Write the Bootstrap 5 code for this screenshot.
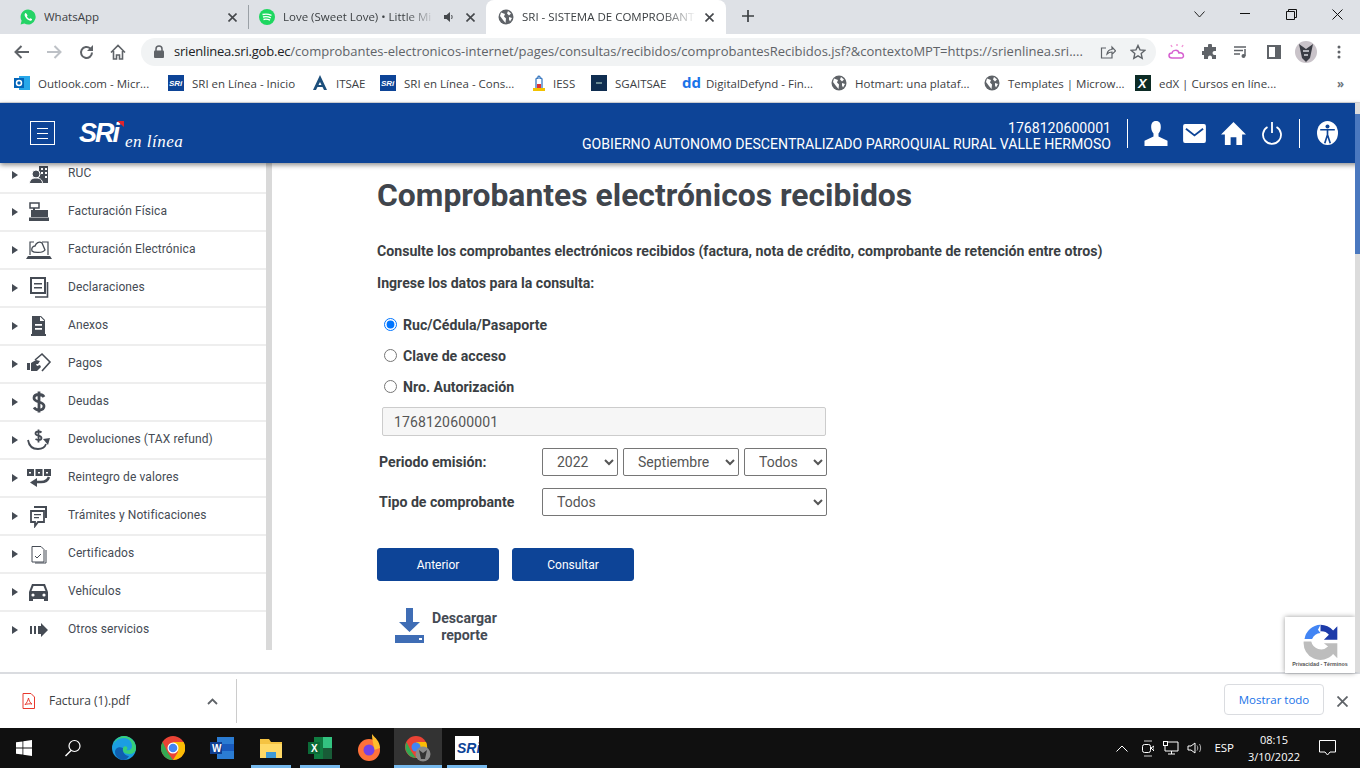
<!DOCTYPE html>
<html lang="es">
<head>
  <meta charset="UTF-8">
  <title>SRI - SISTEMA DE COMPROBANTES</title>
  <link href="https://cdn.jsdelivr.net/npm/bootstrap@5.3.0/dist/css/bootstrap.min.css" rel="stylesheet">
  <style>
    html, body { height: 768px; overflow: hidden; }
    body { font-family: "Open Sans", "Liberation Sans", sans-serif; font-size: 12px; color: #3c4043; background: #fff; }
    .tabstrip { height: 34px; background: #dee1e6; }
    .tabitem { height: 34px; font-size: 11.5px; white-space: nowrap; }
    .tabitem svg.favi { margin-right: 8px; flex-shrink: 0; }
    .tab-a { width: 248px; padding: 0 11px 0 20px; }
    .tab-b { width: 236px; height: 24px; margin-top: 5px; padding: 0 9px 0 10px; border-left: 1px solid #9aa0a6; }
    .tab-c { width: 240px; margin-left: 2px; padding: 0 12px; background: #fff; border-radius: 8px 8px 0 0; }
    .tabtitle { flex: 1; overflow: hidden; }
    .fadeend { -webkit-mask-image: linear-gradient(to right, #000 80%, transparent 100%); mask-image: linear-gradient(to right, #000 80%, transparent 100%); }
    .newtab { margin: 10px auto 0 16px; }
    .winbtn { width: 46px; height: 28px; }
    .toolbar { height: 35px; padding-left: 6px; }
    .tbtn { width: 32px; }
    .omnibox { height: 28px; width: 1015px; margin-left: 7px; background: #f1f3f4; border-radius: 14px; font-size: 13px; color: #5f6368; padding: 0 10px 0 13px; white-space: nowrap; }
    .omnibox b { font-weight: 400; color: #202124; letter-spacing: -.2px; }
    .marks { height: 34px; border-bottom: 1px solid #dadce0; padding: 0 0 4px 14px; white-space: nowrap; font-size: 11.5px; }
    .markitem { flex-shrink: 0; }
    .markitem svg { margin-right: 8px; }
    .markitem:nth-child(1) { width: 154px; }
    .markitem:nth-child(2) { width: 144px; }
    .markitem:nth-child(3) { width: 68px; }
    .markitem:nth-child(4) { width: 152px; }
    .markitem:nth-child(5) { width: 59px; }
    .markitem:nth-child(6) { width: 91px; }
    .markitem:nth-child(7) { width: 149px; }
    .markitem:nth-child(8) { width: 153px; }
    .markitem:nth-child(9) { width: 151px; }
    .markitem:nth-child(5) svg { margin-right: 7px; }
    .ddmark { display: inline-block; width: 24px; color: #1a73e8; font-size: 15px; font-weight: 700; line-height: 1; }
    .sitehead { height: 60px; background: #0d4497; color: #fff; font-family: Roboto, sans-serif; box-shadow: 0 2px 5px rgba(0,0,0,.45); position: relative; z-index: 2; padding-left: 30px; padding-right: 22px; }
    .burger { width: 25px; height: 24px; border: 1px solid #fff; }
    .srilogo { position: relative; font: italic 700 27px "Liberation Sans", sans-serif; letter-spacing: -2px; margin-left: 24px; }
    .srilogo::after { content: ""; position: absolute; left: 38px; top: 3px; border-top: 6px solid #e0242c; border-left: 7px solid transparent; }
    .srilogo span { position: relative; top: 5px; font: italic 400 17px "Liberation Serif", serif; letter-spacing: .5px; margin-left: 7px; }
    .headid { font-size: 14.1px; line-height: 16px; text-align: right; margin-top: 6px; margin-right: 16px; }
    .headsep { width: 1px; height: 29px; background: #fff; flex-shrink: 0; }
    .pagebody { height: 509px; position: relative; font-family: Roboto, sans-serif; }
    .sidemenu { width: 272px; height: 487px; border-right: 6px solid #d9d9d9; overflow: hidden; flex-shrink: 0; }
    .menuitem { height: 38px; flex-shrink: 0; border-bottom: 2px solid #eee; padding-left: 12px; color: #454b54; font-size: 12px; letter-spacing: .1px; }
    .menuitem:first-child { height: 31px; padding-bottom: 6px; }
    .menuitem:last-child { border-bottom: 0; padding-bottom: 2px; }
    .caretmark { width: 0; height: 0; border-left: 6px solid #454b54; border-top: 4.5px solid transparent; border-bottom: 4.5px solid transparent; }
    .micon { width: 26px; height: 24px; margin: 0 16px 0 8px; }
    .micon svg { display: block; }
    .menutext { margin-bottom: 3px; }
    .maincol { padding: 0 0 0 105px; width: 840px; color: #3b3f44; }
    .pagetitle { font-size: 31.85px; font-weight: 700; color: #40454c; margin: 14px 0 0; line-height: 36px; }
    .lead-line { font-size: 14.14px; font-weight: 700; margin: 0; line-height: 18px; white-space: nowrap; }
    .lead-a { margin-top: 29px; }
    .lead-b { margin-top: 14px; margin-bottom: 18px; }
    .radioline { height: 31px; padding-left: 7px; font-size: 14.14px; font-weight: 700; }
    .radioline input { width: 13px; height: 13px; margin: 0 6px 2px 0; accent-color: #0075ff; }
    .rucbox { width: 444px; height: 29px; margin-left: 5px; padding-top: 2px; background: #f6f6f6; border: 1px solid #ccc; border-radius: 2px; font-size: 14px; color: #555; padding-left: 11px; letter-spacing: .15px; }
    .fieldrow { height: 29px; margin-top: 11px; font-size: 14.14px; font-weight: 700; }
    .fieldlabel { width: 165px; padding-left: 2px; margin-top: 2px; }
    .selbox { height: 28px; border: 1px solid #767676; border-radius: 2px; background: #fff; color: #555; font-size: 14px; font-weight: 400; padding: 0 6px 0 10px; }
    .sel-year { width: 76px; }
    .sel-month { width: 116px; margin-left: 5px; }
    .sel-day { width: 83px; margin-left: 5px; }
    .sel-type { width: 285px; }
    .btnrow { gap: 13px; margin-top: 32px; }
    .sendbtn { width: 122px; height: 33px; background: #0d4497; border-color: #0d4497; color: #fff; font-size: 12px; padding: 0; border-radius: 3px; }
    .dlrow { margin-top: 27px; padding-left: 18px; }
    .dlblock { font-size: 14.14px; font-weight: 700; color: #454b54; line-height: 17px; text-align: center; margin: 2px 0 0 7px; }
    .captcha { position: absolute; right: 5px; top: 454px; width: 70px; height: 56px; background: #fff; box-shadow: 0 0 5px rgba(0,0,0,.4); font: 700 5.3px "Liberation Sans", sans-serif; color: #555; white-space: nowrap; text-align: center; }
    .captcha svg { display: block; margin: 6px 0 1px 17px; }
    .scrolltrack { position: absolute; right: 0; top: -60px; width: 5px; height: 569px; padding-top: 11px; background: #dcdcdc; z-index: 3; }
    .scrollthumb { height: 140px; background: #4a78bf; }
    .dlbar { height: 56px; border-top: 2px solid #dadce0; padding: 0 12px 0 22px; }
    .dlname { width: 158px; margin-left: 14px; font-size: 12px; }
    .dlsep { width: 1px; height: 44px; background: #ccc; margin-left: 18px; }
    .showall { width: 100px; height: 31px; border: 1px solid #dadce0; border-radius: 4px; color: #1a73e8; font-size: 11.5px; padding: 0; margin: 0 13px 3px 0; }
    .taskbar { height: 40px; background: #101010; color: #fff; font-size: 11.5px; }
    .taskcell { width: 48px; height: 40px; margin-right: 1px; position: relative; }
    .taskcell.open::after { content: ""; position: absolute; left: 4px; right: 4px; bottom: 0; height: 3px; background: #76b9ed; }
    .taskcell.current { background: #333; }
    .taskcell.current::after { left: 0; right: 0; }
    .taskcell.appstart { margin-left: 2px; }
    .tray { padding-right: 24px; }
    .clockbox { width: 54px; margin-left: 13px; line-height: 17px; font-size: 11px; text-align: center; }
  </style>
</head>
<body class="d-flex flex-column">

  <div class="tabstrip d-flex">
    <div class="tabitem tab-a d-flex align-items-center">
      <svg class="favi" width="16" height="16" viewBox="0 0 16 16"><path fill="#25d366" d="M8 .5a7.5 7.5 0 0 0-6.4 11.3L.6 15.500l3.800-1A7.500 7.500 0 1 0 8 .5z"/><path fill="#fff" d="M5.500 4c-.9.600-1.200 2-.4 3.500 1 1.900 2.300 3.200 4.300 4 1.300.4 2.400-.2 2.700-1.100.1-.5-1.700-1.500-2-1.200l-.7.8c-1-.4-2-1.300-2.500-2.400l.6-.8C7.700 6.400 6.200 3.600 5.500 4z"/></svg>
      <span class="tabtitle">WhatsApp</span>
      <svg width="9" height="9" viewBox="0 0 9 9"><path d="M.5.500l8 8M8.500.500l-8 8" stroke="#45484c" stroke-width="1.600"/></svg>
    </div>
    <div class="tabitem tab-b d-flex align-items-center">
      <svg class="favi" width="16" height="16" viewBox="0 0 16 16"><circle cx="8" cy="8" r="8" fill="#1ed760"/><path d="M3.500 5.500c3-.8 6-.6 9 .8M4 8c2.600-.7 5.200-.5 7.800.8M4.500 10.500c2.200-.5 4.400-.4 6.500.7" stroke="#fff" stroke-width="1.300" fill="none"/></svg>
      <span class="tabtitle fadeend">Love (Sweet Love) • Little Mi</span>
      <svg width="10" height="10" viewBox="0 0 10 10" class="mx-2"><path d="M0 3h2.500L6 0v10L2.500 7H0z" fill="#45484c"/><path d="M7.500 3c.8 1.200.8 2.800 0 4" fill="none" stroke="#45484c"/></svg>
      <svg style="margin-left:4px" width="9" height="9" viewBox="0 0 9 9"><path d="M.5.500l8 8M8.500.500l-8 8" stroke="#45484c" stroke-width="1.600"/></svg>
    </div>
    <div class="tabitem tab-c d-flex align-items-center">
      <svg class="favi" width="16" height="16" viewBox="0 0 16 16"><circle cx="8" cy="8" r="7.500" fill="#5f6368"/><path fill="#fff" d="M3 3.500 7 5 6 7.500 8 9.500 7.500 14 5 11 2 7zM10 2l3 2.500-2 2-2-2zM11 8l3 1-2 3.500-1-2z"/></svg>
      <span class="tabtitle fadeend">SRI - SISTEMA DE COMPROBANT</span>
      <svg class="ms-2" width="9" height="9" viewBox="0 0 9 9"><path d="M.5.500l8 8M8.500.500l-8 8" stroke="#45484c" stroke-width="1.600"/></svg>
    </div>
    <svg class="newtab" width="12" height="12" viewBox="0 0 12 12"><path d="M6 0v12M0 6h12" stroke="#3c4043" stroke-width="1.700"/></svg>
    <div class="d-flex">
      <div class="winbtn d-flex align-items-center justify-content-center"><svg width="11" height="7" viewBox="0 0 11 7"><path d="M.5.500 5.500 6l5-5.500" fill="none" stroke="#222"/></svg></div>
      <div class="winbtn d-flex align-items-center justify-content-center"><svg width="10" height="2"><rect width="10" height="1" fill="#111"/></svg></div>
      <div class="winbtn d-flex align-items-center justify-content-center"><svg width="11" height="11" viewBox="0 0 11 11"><path d="M.5 2.500h8v8h-8zM2.500 2.500v-2h8v8h-2" fill="none" stroke="#111"/></svg></div>
      <div class="winbtn d-flex align-items-center justify-content-center"><svg width="11" height="11" viewBox="0 0 11 11"><path d="M.5.500l10 10M10.500.500l-10 10" stroke="#111"/></svg></div>
    </div>
  </div>

  <div class="toolbar d-flex align-items-center">
    <div class="tbtn text-center"><svg width="16" height="14" viewBox="0 0 16 14"><path d="M15 7H2M7.500 1 1.500 7l6 6" fill="none" stroke="#5f6368" stroke-width="2"/></svg></div>
    <div class="tbtn text-center"><svg width="16" height="14" viewBox="0 0 16 14"><path d="M1 7h13M8.500 1l6 6-6 6" fill="none" stroke="#bdc1c6" stroke-width="2"/></svg></div>
    <div class="tbtn text-center"><svg width="15" height="15" viewBox="0 0 15 15"><path d="M13 7.500a5.500 5.500 0 1 1-1.700-4" fill="none" stroke="#5f6368" stroke-width="2"/><path d="M14 0v6H8z" fill="#5f6368"/></svg></div>
    <div class="tbtn text-center"><svg width="16" height="16" viewBox="0 0 16 16"><path d="M1 8.500 8 1.500l7 7M3.500 7v8h3v-4h3v4h3V7" fill="none" stroke="#5f6368" stroke-width="1.600"/></svg></div>
    <div class="omnibox d-flex align-items-center">
      <svg width="10" height="13" viewBox="0 0 10 13" class="flex-shrink-0" style="margin-right:10px"><path d="M2 6V4a3 3 0 0 1 6 0v2" fill="none" stroke="#5f6368" stroke-width="1.500"/><rect y="5.500" width="10" height="7.500" rx="1" fill="#5f6368"/></svg>
      <span class="flex-grow-1"><b>srienlinea.sri.gob.ec</b>/comprobantes-electronicos-internet/pages/consultas/recibidos/comprobantesRecibidos.jsf?&amp;contextoMPT=https://srienlinea.sri....</span>
      <svg width="16" height="16" viewBox="0 0 16 16" class="flex-shrink-0"><path d="M12 9.500V14H1.500V4H6M7 10c.5-3 2.500-4.500 5-4.500V3l3.500 3.800-3.500 3.500V8C10 8 8.500 8.500 7 10z" fill="none" stroke="#5f6368" stroke-width="1.200"/></svg>
      <svg width="16" height="16" viewBox="0 0 16 16" class="flex-shrink-0" style="margin-left:14px"><path d="m8 1.500 2 4.400 4.800.5-3.600 3.200 1 4.700L8 11.900l-4.200 2.400 1-4.700L1.200 6.400 6 5.900z" fill="none" stroke="#5f6368" stroke-width="1.400"/></svg>
    </div>
    <div class="d-flex align-items-center" style="margin-left:12px">
      <svg width="18" height="16" viewBox="0 0 18 16"><path d="M4 14c-4 0-4-5 0-5 .5-3 6-4 7 0 5-1 6 5 2 5z" fill="none" stroke="#d65fd0" stroke-width="1.500"/><path d="M3 1l1 2M9 0v2M15 1l-1 2" stroke="#f29ad8" stroke-width="1.500"/></svg>
      <svg width="16" height="16" viewBox="0 0 16 16" style="margin-left:16px"><path fill="#5f6368" d="M6 1.500a2 2 0 0 1 4 0V3h4v4h-1.500a2 2 0 0 0 0 4H14v4h-4v-1.500a2 2 0 0 0-4 0V15H2v-4H.5a2 2 0 0 1 0-4H2V3h4z"/></svg>
      <svg width="14" height="12" viewBox="0 0 14 12" style="margin-left:16px"><path d="M0 1h12M0 4.500h9M0 8h6" stroke="#5f6368" stroke-width="1.300"/><path d="M11 3v7" stroke="#5f6368" stroke-width="1.500"/><circle cx="9.500" cy="10" r="2" fill="#5f6368"/></svg>
      <svg width="14" height="14" viewBox="0 0 14 14" style="margin-left:19px"><path d="M1 1h12v12H1z" fill="none" stroke="#5f6368" stroke-width="2"/><rect x="8" y="1" width="5" height="12" fill="#5f6368"/></svg>
      <svg width="22" height="22" viewBox="0 0 22 22" style="margin-left:14px"><circle cx="11" cy="11" r="11" fill="#c9c3c9"/><path d="M4 3l7 5 7-5-3 14-4 4-4-4z" fill="#3a3c44"/><path d="M8 10h6M9 14h4" stroke="#d9d9de" stroke-width="1.500"/></svg>
      <svg width="4" height="14" viewBox="0 0 4 14" style="margin-left:20px"><circle cx="2" cy="2" r="1.500" fill="#5f6368"/><circle cx="2" cy="7" r="1.500" fill="#5f6368"/><circle cx="2" cy="12" r="1.500" fill="#5f6368"/></svg>
    </div>
  </div>

  <div class="marks d-flex align-items-center">
    <div class="markitem"><svg width="16" height="16" viewBox="0 0 16 16" class="align-text-bottom"><rect x="5" y="1" width="11" height="14" fill="#28a8ea"/><rect y="3" width="10" height="10" fill="#0364b8"/><circle cx="5" cy="8" r="2.500" fill="none" stroke="#fff" stroke-width="1.500"/></svg>Outlook.com - Micr...</div>
    <div class="markitem"><svg width="16" height="16" viewBox="0 0 16 16" class="align-text-bottom"><rect width="16" height="16" fill="#0d4497"/><text x="1" y="11" font-size="8" font-weight="700" font-style="italic" fill="#fff" font-family="Liberation Sans">SRi</text></svg>SRI en Línea - Inicio</div>
    <div class="markitem"><svg width="16" height="16" viewBox="0 0 16 16" class="align-text-bottom"><path d="M8 0 15 15h-3L8 7l-4 8H1z" fill="#1d4f7c"/><path d="M4 10h8v2H4z" fill="#1d4f7c"/></svg>ITSAE</div>
    <div class="markitem"><svg width="16" height="16" viewBox="0 0 16 16" class="align-text-bottom"><rect width="16" height="16" fill="#0d4497"/><text x="1" y="11" font-size="8" font-weight="700" font-style="italic" fill="#fff" font-family="Liberation Sans">SRi</text></svg>SRI en Línea - Cons...</div>
    <div class="markitem"><svg width="14" height="16" viewBox="0 0 14 16" class="align-text-bottom"><path d="M4 13V4a1 1 0 0 1 2 0V2a1 1 0 0 1 2 0v2a1 1 0 0 1 2 0v9" fill="none" stroke="#2a6ebb" stroke-width="1.200"/><rect x="1" y="13" width="12" height="3" fill="#f2c200"/><rect x="5" y="9" width="4" height="4" fill="#d33"/></svg>IESS</div>
    <div class="markitem"><svg width="16" height="16" viewBox="0 0 16 16" class="align-text-bottom"><rect width="16" height="16" fill="#0f2d50"/><path d="M5 8h6" stroke="#8aa" stroke-width="1.500"/></svg>SGAITSAE</div>
    <div class="markitem"><span class="ddmark">dd</span>DigitalDefynd - Fin...</div>
    <div class="markitem"><svg width="16" height="16" viewBox="0 0 16 16" class="align-text-bottom"><circle cx="8" cy="8" r="7.500" fill="#5f6368"/><path fill="#fff" d="M3 3.500 7 5 6 7.500 8 9.500 7.500 14 5 11 2 7zM10 2l3 2.500-2 2-2-2zM11 8l3 1-2 3.500-1-2z"/></svg>Hotmart: una plataf...</div>
    <div class="markitem"><svg width="16" height="16" viewBox="0 0 16 16" class="align-text-bottom"><circle cx="8" cy="8" r="7.500" fill="#5f6368"/><path fill="#fff" d="M3 3.500 7 5 6 7.500 8 9.500 7.500 14 5 11 2 7zM10 2l3 2.500-2 2-2-2zM11 8l3 1-2 3.500-1-2z"/></svg>Templates | Microw...</div>
    <div class="markitem"><svg width="16" height="16" viewBox="0 0 16 16" class="align-text-bottom"><rect width="16" height="16" fill="#0c2b25"/><text x="3" y="13" font-size="13" font-weight="700" font-style="italic" fill="#fff" font-family="Liberation Sans">X</text></svg>edX | Cursos en líne...</div>
    <div class="ms-auto me-3 text-secondary fw-bold">»</div>
  </div>

  <div class="sitehead d-flex align-items-center">
    <div class="burger d-flex flex-column align-items-center justify-content-center gap-1">
      <span class="d-block bg-white" style="width:11px;height:1px"></span>
      <span class="d-block bg-white" style="width:11px;height:1px"></span>
      <span class="d-block bg-white" style="width:11px;height:1px"></span>
    </div>
    <div class="srilogo me-auto">SRi<span>en línea</span></div>
    <div class="headid"><div>1768120600001</div><div>GOBIERNO AUTONOMO DESCENTRALIZADO PARROQUIAL RURAL VALLE HERMOSO</div></div>
    <div class="headsep" style="margin-right:15px"></div>
    <svg width="26" height="25" viewBox="0 0 26 26" preserveAspectRatio="none"><path fill="#fff" d="M13 0c3.500 0 5 2.500 4.800 7-.2 3-1.300 5-2.300 6v3l9 4.500V26H1.500v-5.500l9-4.500v-3c-1-1-2.100-3-2.300-6C8 2.500 9.500 0 13 0z"/></svg>
    <svg width="23" height="19" viewBox="0 0 24 20" style="margin-left:14px"><rect width="24" height="20" rx="2" fill="#fff"/><path d="m3 5 9 7 9-7" fill="none" stroke="#0d4497" stroke-width="2"/></svg>
    <svg width="25" height="23" viewBox="0 0 26 24" style="margin-left:15px"><path fill="#fff" d="M13 0 26 13h-4v11h-6v-8h-6v8H4V13H0z"/></svg>
    <svg width="20" height="23" viewBox="0 0 20 23" style="margin-left:16px"><path d="M5.500 5a9 9 0 1 0 9 0" fill="none" stroke="#fff" stroke-width="1.800"/><path d="M10 0v11" stroke="#fff" stroke-width="1.800"/></svg>
    <div class="headsep" style="margin:0 17px"></div>
    <svg width="21" height="24" viewBox="0 0 23 26" preserveAspectRatio="none"><ellipse cx="11.500" cy="13" rx="11.500" ry="13" fill="#fff"/><circle cx="11.500" cy="6" r="2.200" fill="#0d4497"/><path d="M3.500 9.500h16M11.500 9v7M11.500 15l-3 9M11.500 15l3 9" stroke="#0d4497" stroke-width="1.800" fill="none"/></svg>
  </div>

  <div class="pagebody d-flex">
    <div class="sidemenu d-flex flex-column" id="sideMenu"></div>
    <div class="maincol">
      <h1 class="pagetitle">Comprobantes electrónicos recibidos</h1>
      <p class="lead-line lead-a">Consulte los comprobantes electrónicos recibidos (factura, nota de crédito, comprobante de retención entre otros)</p>
      <p class="lead-line lead-b">Ingrese los datos para la consulta:</p>
      <label class="radioline d-flex align-items-center"><input type="radio" name="tipoConsulta" checked>Ruc/Cédula/Pasaporte</label>
      <label class="radioline d-flex align-items-center"><input type="radio" name="tipoConsulta">Clave de acceso</label>
      <label class="radioline d-flex align-items-center"><input type="radio" name="tipoConsulta">Nro. Autorización</label>
      <div class="rucbox d-flex align-items-center mt-1">1768120600001</div>
      <div class="fieldrow d-flex align-items-center">
        <div class="fieldlabel">Periodo emisión:</div>
        <select class="selbox sel-year"><option>2022</option></select>
        <select class="selbox sel-month"><option>Septiembre</option></select>
        <select class="selbox sel-day"><option>Todos</option></select>
      </div>
      <div class="fieldrow d-flex align-items-center">
        <div class="fieldlabel">Tipo de comprobante</div>
        <select class="selbox sel-type"><option>Todos</option></select>
      </div>
      <div class="btnrow d-flex">
        <button class="btn sendbtn" type="button">Anterior</button>
        <button class="btn sendbtn" type="button">Consultar</button>
      </div>
      <div class="dlrow d-flex align-items-center">
        <svg width="30" height="36" viewBox="0 0 30 36"><path fill="#3f6db5" d="M11 0h7v14h7L14.500 24 4 14h7z"/><path fill="#3f6db5" d="M0 27h29v8H0z"/><rect x="24" y="30" width="3" height="2" fill="#fff"/></svg>
        <div class="dlblock">Descargar<br>reporte</div>
      </div>
    </div>
    <div class="captcha">
      <svg width="37" height="37" viewBox="0 0 44 44"><path fill="#1c3aa9" d="M22 2a20 20 0 0 1 15 7l5-5v16H26l6-6a12 12 0 0 0-10-4z"/><path fill="#4285f4" d="M22 2A20 20 0 0 0 3 19h9a12 12 0 0 1 10-7l-3-4z"/><path fill="#bdbdbd" d="M2 22h9a12 12 0 0 0 20 6l-5-4h16v18l-5-5A20 20 0 0 1 2 22z"/></svg>
      <div>Privacidad - Términos</div>
    </div>
    <div class="scrolltrack"><div class="scrollthumb"></div></div>
  </div>

  <div class="dlbar d-flex align-items-center">
    <svg width="13" height="16" viewBox="0 0 13 16"><path d="M1 .5h8l3.500 3.500v11.500H1z" fill="none" stroke="#e8382c"/><path d="M6.500 5c-.5 2-1.500 5-3.500 6.500 2-.5 5-1 7-.5-2-1-3-3.500-3.500-6z" fill="none" stroke="#e8382c"/></svg>
    <span class="dlname">Factura (1).pdf</span>
    <svg width="11" height="7" viewBox="0 0 11 7"><path d="M1 6l4.500-4.500L10 6" fill="none" stroke="#5f6368" stroke-width="1.800"/></svg>
    <div class="dlsep me-auto"></div>
    <button class="btn showall" type="button">Mostrar todo</button>
    <svg width="11" height="11" viewBox="0 0 11 11"><path d="M.5.500l10 10M10.500.500l-10 10" stroke="#5f6368" stroke-width="1.800"/></svg>
  </div>

  <div class="taskbar d-flex align-items-center">
    <div class="taskcell d-flex align-items-center justify-content-center"><svg width="16" height="16" viewBox="0 0 16 16"><path fill="#fff" d="M0 2.300 6.500 1.400v6.200H0zM7.300 1.300 16 0v7.600H7.300zM0 8.400h6.500v6.200L0 13.700zM7.300 8.400H16V16l-8.700-1.300z"/></svg></div>
    <div class="taskcell d-flex align-items-center justify-content-center"><svg width="18" height="18" viewBox="0 0 18 18"><circle cx="10.500" cy="7" r="5.500" fill="none" stroke="#fff" stroke-width="1.200"/><path d="M7 11.500 1.500 17" stroke="#fff" stroke-width="1.400"/></svg></div>
    <div class="taskcell appstart d-flex align-items-center justify-content-center"><svg width="24" height="24" viewBox="0 0 24 24"><circle cx="12" cy="12" r="12" fill="#1b9de2"/><path d="M24 12c0 4-3 6-7 6-5 0-7-3-6-6 1-2 3-2 4-1s0 3-1 3c4 1 6-1 6-4 0-5-4-8-8-8C6 2 1 6 1 11c0-6 5-11 11-11s12 5 12 12z" fill="#37d07a"/><path d="M11 12c-1 4 2 8 6 8-1 2-3 4-6 4-4 0-8-4-8-8 0-3 3-6 8-4z" fill="#0f5fb0"/></svg></div>
    <div class="taskcell d-flex align-items-center justify-content-center"><svg width="24" height="24" viewBox="0 0 24 24"><circle cx="12" cy="12" r="12" fill="#ea4335"/><path d="M1.600 6 7 17l5 7a12 12 0 0 1-10.400-18z" fill="#34a853"/><path d="M12 6h10.600A12 12 0 0 1 12 24l5-8z" fill="#fbbc05"/><circle cx="12" cy="12" r="5.500" fill="#fff"/><circle cx="12" cy="12" r="4.300" fill="#4285f4"/></svg></div>
    <div class="taskcell d-flex align-items-center justify-content-center"><svg width="24" height="24" viewBox="0 0 24 24"><rect x="7" y="1" width="17" height="22" fill="#2b7cd3"/><path d="M7 8h17v7H7z" fill="#185abd"/><rect y="6" width="12" height="12" fill="#103f91"/><text x="2" y="16" font-size="10" font-weight="700" fill="#fff" font-family="Liberation Sans">W</text></svg></div>
    <div class="taskcell open d-flex align-items-center justify-content-center"><svg width="24" height="24" viewBox="0 0 24 24"><path d="M1 3h9l2 3h11v16H1z" fill="#f5c342"/><path d="M1 8h22v14H1z" fill="#ffd966"/><path d="M7 22v-6h10v6z" fill="#3f9ad6"/></svg></div>
    <div class="taskcell open d-flex align-items-center justify-content-center"><svg width="24" height="24" viewBox="0 0 24 24"><rect x="6" y="1" width="18" height="22" fill="#107c41"/><path d="M15 1h9v11h-9z" fill="#33c481"/><path d="M15 12h9v11h-9z" fill="#185c37"/><rect y="6" width="12" height="12" fill="#0b6a37"/><text x="3" y="16" font-size="10" font-weight="700" fill="#fff" font-family="Liberation Sans">X</text></svg></div>
    <div class="taskcell d-flex align-items-center justify-content-center"><svg width="24" height="28" viewBox="0 0 24 28"><circle cx="12" cy="16" r="11" fill="#ff7139"/><path d="M15 0c3 4 8 7 8 14l-6 2c0-5-2-9-2-16z" fill="#ffbd2e"/><circle cx="12" cy="16" r="5.500" fill="#7542e5"/></svg></div>
    <div class="taskcell current open d-flex align-items-center justify-content-center"><svg width="26" height="28" viewBox="0 0 26 28"><circle cx="11" cy="13" r="11" fill="#ea4335"/><path d="M1.500 8 6 17l5 7a11 11 0 0 1-9.500-16z" fill="#34a853"/><path d="M11 8h10a11 11 0 0 1-10 16l4-7z" fill="#fbbc05"/><circle cx="11" cy="13" r="4.500" fill="#4285f4"/><circle cx="18" cy="20" r="7.500" fill="#8a8a8a"/><path d="M14 16l4 3 4-3-2 9h-4z" fill="#333"/></svg></div>
    <div class="taskcell open d-flex align-items-center justify-content-center"><svg width="24" height="24" viewBox="0 0 24 24"><rect width="24" height="24" fill="#fff"/><text x="2" y="17" font-size="14" font-weight="700" font-style="italic" fill="#0d4497" font-family="Liberation Sans">SRi</text></svg></div>
    <div class="tray ms-auto d-flex align-items-center">
      <svg width="12" height="7" viewBox="0 0 12 7"><path d="M.5 6.500 6 1l5.500 5.500" fill="none" stroke="#fff"/></svg>
      <svg width="12" height="17" viewBox="0 0 12 17" style="margin-left:14px"><path d="M2 1h8M2 16h8" stroke="#ccc"/><rect x=".5" y="4.500" width="8" height="8" rx="2" fill="none" stroke="#fff"/><path d="m9 8 3-2v5z" fill="none" stroke="#fff"/></svg>
      <svg width="16" height="14" viewBox="0 0 16 14" style="margin-left:9px"><path d="M2 1h13v9H2zM8.500 10v3M5 13h7" fill="none" stroke="#fff"/><rect x=".5" y=".5" width="4" height="4" fill="#101010" stroke="#fff"/></svg>
      <svg width="16" height="14" viewBox="0 0 16 14" style="margin-left:8px"><path d="M1 5h3l4-3v10L4 9H1z" fill="none" stroke="#fff"/><path d="M10 4.500c1 1.500 1 3.500 0 5M12.500 3c1.500 2.500 1.500 5.500 0 8" fill="none" stroke="#aaa"/></svg>
      <span style="margin-left:11px">ESP</span>
      <div class="clockbox"><div>08:15</div><div>3/10/2022</div></div>
      <svg width="17" height="16" viewBox="0 0 17 16" style="margin-left:18px"><path d="M.5.500h16v11.500h-5.500l-2.500 3-2.500-3H.5z" fill="none" stroke="#fff"/></svg>
    </div>
  </div>

  <script>
    // menu lateral: texto + icono de cada opcion (viewBox 26x24)
    const line = 'fill="none" stroke="#454b54"';
    const menuData = [
      ['RUC', '<path d="M13 3h9v17h-9z"/><path fill="#fff" d="M15 5h2v2h-2zM19 5h2v2h-2zM15 9h2v2h-2zM19 9h2v2h-2zM19 13h2v2h-2z"/><circle cx="10" cy="11" r="4" stroke="#fff"/><path stroke="#fff" d="M3.500 20.500c0-4 3-5.500 6.500-5.500s6.500 1.500 6.500 5.500z"/>'],
      ['Facturación Física', '<path d="M4 3h9v5H4z" ' + line + ' stroke-width="1.500"/><path d="M7 8h2v3H7zM5 10h17v7H5zM3 17.500h20V21H3z"/>'],
      ['Facturación Electrónica', '<path d="M4 17V4h4M16 4h6v13" ' + line + ' stroke-width="1.200"/><path d="M2 18h22l2 3H0z"/><path d="M6 13c-1-3 1-5 3-5 1-3 4-5 7-3l3 7c-2 3-11 3-13 1z" ' + line + ' stroke-width="1.300"/>'],
      ['Declaraciones', '<path d="M5 2h14v15H5z" ' + line + ' stroke-width="2"/><path d="M21.500 6v15H9" ' + line + ' stroke-width="1.600"/><path d="M8 7h8v1.500H8zM8 11h8v1.500H8z"/>'],
      ['Anexos', '<path d="M6 2h9l4 4v14H6zM5 20h15v2H5z"/><path fill="#fff" d="M14 2.500V7h4.500zM9 10h7v1.800H9zM9 14h7v1.800H9z"/>'],
      ['Pagos', '<path d="M1 11h3v7H1zM5 11l5-3 4 1-2 3-2 0 1 2 3-1 1 2-4 4H5z"/><path d="m9 8 7-6 8 8-8 9" ' + line + ' stroke-width="1.600"/>'],
      ['Deudas', '<path d="M18 7c-1-2-3-2.500-5-2.500-3 0-5 1-5 3.500 0 5 10 3 10 8 0 3-2 4-5 4-2 0-4-1-5-2.500M13 1.500v21" ' + line + ' stroke-width="2.800"/>'],
      ['Devoluciones (TAX refund)', '<path d="M15.500 4.500c-1-1-2-1-3-1-2 0-3 .8-3 2 0 2.800 6 1.500 6 4.500 0 1.500-1.500 2-3 2-1 0-2-.4-3-1M12.500 1.500v13" ' + line + ' stroke-width="1.800"/><path d="M2 12c1 6 5 9 10 9 4 0 7-2 8-5" ' + line + ' stroke-width="1.800"/><path d="m17 11 7-1-2 7z"/>'],
      ['Reintegro de valores', '<path d="M1 3h7v7H1zM9.500 3h7v7h-7zM18 3h7v7h-7z"/><path fill="#fff" d="M3 6h2v1.500H3zM12 6h2v1.500h-2zM20 6h2v1.500h-2z"/><path d="M23 11c-1 3-3 5-8 5h-5" ' + line + ' stroke-width="2.500"/><path d="m11 12-7 4.500 7 4.500z"/>'],
      ['Trámites y Notificaciones', '<path d="M8 2h13v12h-2V4H8z"/><path d="M5 7h13v11h-6l-3 4v-4H5z" ' + line + ' stroke-width="1.800"/><path d="M8 10h7v1.300H8zM8 13h5v1.300H8z"/>'],
      ['Certificados', '<path d="M6 4.500h9l3 3v12.500H6zM20 8v13H9" ' + line + '/><path d="m9 14 2 2 4-4" ' + line + '/>'],
      ['Vehículos', '<path d="M3 12l3-8h13l3 8v9h-4v-2H7v2H3z"/><path fill="#fff" d="M7.500 6h10l2 5h-14z"/><circle cx="7" cy="15" r="1.600" fill="#fff"/><circle cx="18" cy="15" r="1.600" fill="#fff"/>'],
      ['Otros servicios', '<path d="M4 8h2v8H4zM8 8h2v8H8zM12 8h3V5l7 7-7 7v-3h-3z"/>']
    ];
    const sideMenu = document.getElementById('sideMenu');
    menuData.forEach(function (item) {
      const row = document.createElement('div');
      row.className = 'menuitem d-flex align-items-center';
      row.innerHTML = '<span class="caretmark"></span><span class="micon"><svg width="26" height="24" viewBox="0 0 26 24" fill="#454b54">' + item[1] + '</svg></span><span class="menutext">' + item[0] + '</span>';
      sideMenu.appendChild(row);
    });
  </script>
  <script src="https://cdn.jsdelivr.net/npm/bootstrap@5.3.0/dist/js/bootstrap.bundle.min.js"></script>
</body>
</html>
